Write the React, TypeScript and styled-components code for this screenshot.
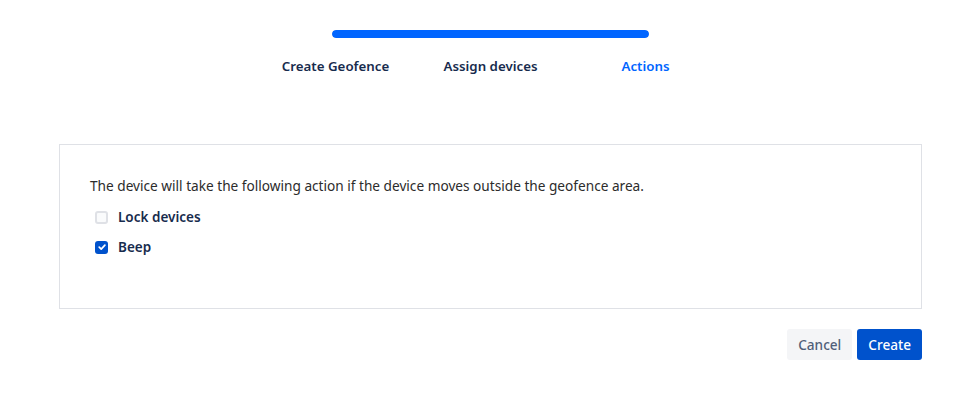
import React, {FC, useState} from 'react';
import styled, {createGlobalStyle} from 'styled-components';

const GlobalStyle = createGlobalStyle`
  html, body {
    margin: 0;
    padding: 0;
    background: #ffffff;
    font-family: "Noto Sans", "Liberation Sans", sans-serif;
  }
`;

const steps = ['Create Geofence', 'Assign devices', 'Actions'];

type Action = {id: string; label: string; checked: boolean};

const initialActions: Action[] = [
  {id: 'lock', label: 'Lock devices', checked: false},
  {id: 'beep', label: 'Beep', checked: true},
];

const CheckIcon: FC = () => (
  <svg width="10" height="10" viewBox="0 0 10 10" fill="none">
    <path d="M2.2 5.2 L4.2 7.1 L7.9 3.1" stroke="#ffffff" strokeWidth="1.7" strokeLinecap="round" strokeLinejoin="round" />
  </svg>
);

const App: FC = () => {
  const [actions, setActions] = useState(initialActions);
  const activeStep = 2;

  const toggle = (id: string) =>
    setActions(actions.map(a => (a.id === id ? {...a, checked: !a.checked} : a)));

  return (
    <Page>
      <GlobalStyle />
      <Stepper>
        <Track>
          <Fill style={{width: `${(activeStep / (steps.length - 1)) * 100}%`}} />
        </Track>
        <Steps>
          {steps.map((step, i) => (
            <StepLabel key={step} active={i === activeStep}>{step}</StepLabel>
          ))}
        </Steps>
      </Stepper>

      <Card>
        <Description>
          The device will take the following action if the device moves outside the geofence area.
        </Description>
        <Options>
          {actions.map(action => (
            <Option key={action.id} onClick={() => toggle(action.id)}>
              <Box checked={action.checked}>{action.checked && <CheckIcon />}</Box>
              <OptionLabel>{action.label}</OptionLabel>
            </Option>
          ))}
        </Options>
      </Card>

      <Footer>
        <Button>Cancel</Button>
        <Button primary>Create</Button>
      </Footer>
    </Page>
  );
};

const Page = styled.div`
  padding: 30px 53px 0 59px;
  display: flex;
  flex-direction: column;
`;

const Stepper = styled.div`
  width: 465px;
  margin: 0 auto;
  display: flex;
  flex-direction: column;
`;

const Track = styled.div`
  height: 8px;
  margin: 0 74px;
  border-radius: 4px;
  background: #dfe1e6;
  overflow: hidden;
`;

const Fill = styled.div`
  height: 100%;
  border-radius: 4px;
  background: #0065ff;
`;

const Steps = styled.div`
  display: grid;
  grid-template-columns: repeat(3, 1fr);
  margin-top: 19px;
`;

const StepLabel = styled.div<{active?: boolean}>`
  text-align: center;
  font-size: 13.3px;
  line-height: 18px;
  font-weight: 600;
  color: ${({active}) => (active ? '#0065ff' : '#172b4d')};
`;

const Card = styled.div`
  margin-top: 69px;
  border: 1px solid #dfe1e6;
  padding: 31px 30px 51px;
`;

const Description = styled.div`
  font-size: 13.65px;
  line-height: 20px;
  color: #2c2c2c;
`;

const Options = styled.div`
  display: flex;
  flex-direction: column;
  gap: 10px;
  margin-top: 11px;
  padding-left: 5px;
`;

const Option = styled.label`
  display: flex;
  align-items: center;
  gap: 10px;
  height: 20px;
  cursor: pointer;
`;

const Box = styled.span<{checked?: boolean}>`
  width: 13px;
  height: 13px;
  box-sizing: border-box;
  border-radius: 3px;
  display: flex;
  align-items: center;
  justify-content: center;
  border: ${({checked}) => (checked ? 'none' : '2px solid #dfe1e6')};
  background: ${({checked}) => (checked ? '#0052cc' : '#fafbfc')};
`;

const OptionLabel = styled.span`
  font-size: 13.5px;
  font-weight: 600;
  color: #172b4d;
`;

const Footer = styled.div`
  display: flex;
  justify-content: flex-end;
  gap: 5px;
  margin-top: 20px;
`;

const Button = styled.button<{primary?: boolean}>`
  height: 31px;
  padding: 0 11px;
  border: none;
  border-radius: 3px;
  font-family: inherit;
  font-size: 13.6px;
  font-weight: 500;
  cursor: pointer;
  background: ${({primary}) => (primary ? '#0052cc' : '#f4f5f7')};
  color: ${({primary}) => (primary ? '#ffffff' : '#505f79')};
`;

export default App;
